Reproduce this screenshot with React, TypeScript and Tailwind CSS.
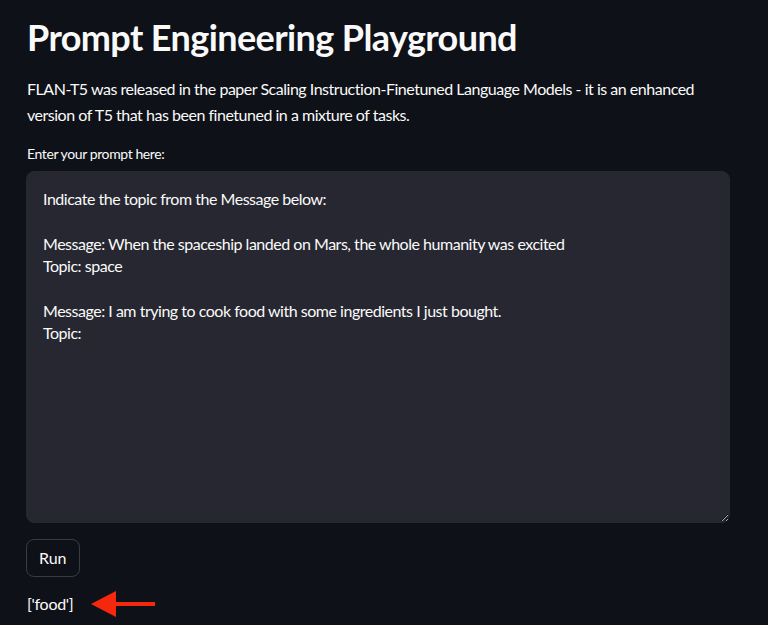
import React from "react";

const prompt = `Indicate the topic from the Message below:

Message: When the spaceship landed on Mars, the whole humanity was excited
Topic: space

Message: I am trying to cook food with some ingredients I just bought.
Topic:`;

export default function App() {
  return (
    <div
      className="w-[768px] h-[625px] overflow-hidden bg-[#0e1117] text-[#fafafa] pl-[26px] pr-[38px]"
      style={{ fontFamily: "Lato, 'Noto Sans', sans-serif" }}
    >
      <h1 className="pt-[16px] text-[36px] font-bold leading-[1.2] tracking-[-0.6px] pl-[1px]">
        Prompt Engineering Playground
      </h1>
      <p className="mt-[17px] text-[16px] leading-[1.6] tracking-[-0.48px] pl-[1px]">
        FLAN-T5 was released in the paper Scaling Instruction-Finetuned Language Models - it is an enhanced
        version of T5 that has been finetuned in a mixture of tasks.
      </p>
      <label className="block mt-[16px] text-[14px] leading-[1.6] tracking-[-0.4px] pl-[1px]">Enter your prompt here:</label>
      <textarea
        className="block mt-[5px] w-[704px] h-[352px] rounded-[8px] bg-[#262730] border border-[#262730] px-[16px] py-[16px] text-[16px] leading-[1.4] tracking-[-0.48px] text-[#fafafa] outline-none resize-y"
        style={{ fontFamily: "Lato, 'Noto Sans', sans-serif", colorScheme: "dark" }}
        defaultValue={prompt}
        spellCheck={false}
      />
      <button className="mt-[16px] h-[38px] px-[12px] rounded-[8px] border border-[#3a3c45] bg-[#0e1117] text-[16px] text-[#fafafa]">
        Run
      </button>
      <div className="mt-[13px] flex items-center text-[16px] leading-[1.6] tracking-[-0.3px] pl-[1px]">
        <span>['food']</span>
        <svg width="66" height="28" viewBox="0 0 66 28" className="ml-[18px]">
          <polygon points="0,14 25,1 25,27" fill="#f5270c" />
          <rect x="24" y="12" width="40" height="4" fill="#f5270c" />
        </svg>
      </div>
    </div>
  );
}
